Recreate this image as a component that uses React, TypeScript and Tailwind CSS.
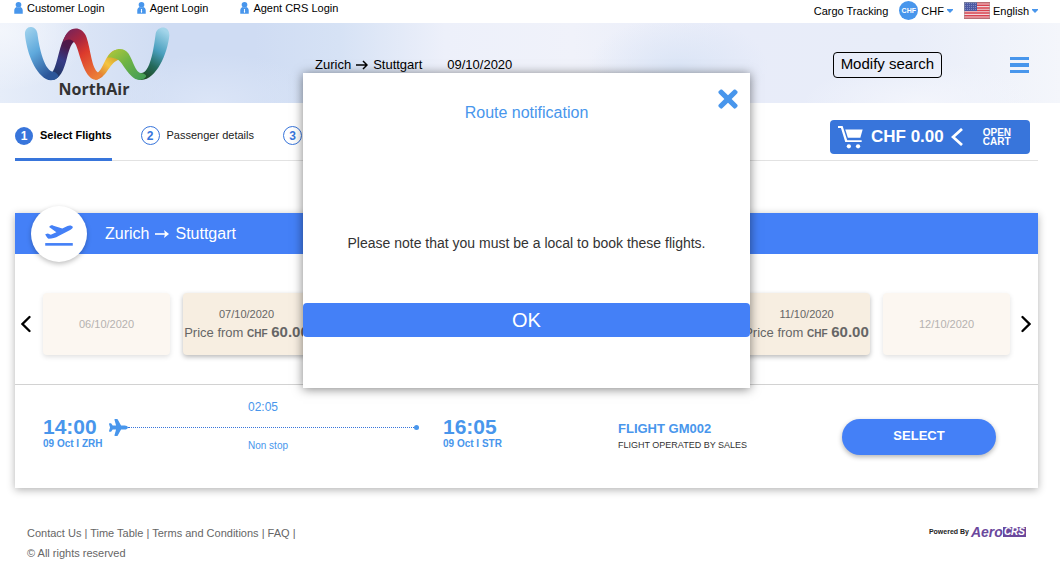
import React from 'react';
import { FaPlane, FaTimes } from 'react-icons/fa';

const LOGINS = [
  { label: 'Customer Login', badge: false },
  { label: 'Agent Login', badge: true },
  { label: 'Agent CRS Login', badge: true },
];

const STEPS = ['Select Flights', 'Passenger details', 'Extras', 'Payment'];

const DATES = [
  { id: 1, date: '06/10/2020', price: null },
  { id: 2, date: '07/10/2020', price: '60.00' },
  { id: 3, date: null, price: null },
  { id: 4, date: null, price: null },
  { id: 5, date: null, price: null },
  { id: 6, date: '11/10/2020', price: '60.00' },
  { id: 7, date: '12/10/2020', price: null },
];

const FOOTER_LINKS = ['Contact Us', 'Time Table', 'Terms and Conditions', 'FAQ'];

const PersonIcon: React.FC<{ badge: boolean }> = ({ badge }) => (
  <svg viewBox="0 0 24 34" className="h-3 w-[9px]" fill="#4896ec" aria-hidden="true">
    <circle cx="12" cy="8" r="8" />
    <path d="M0 33V24c0-6 3-8 7-10 3 2 7 2 10 0 4 2 7 4 7 10v9z" />
    {badge && <path d="M10 20h4l-1 3 1 5-2 3-2-3 1-5z" fill="#fff" />}
  </svg>
);

const Caret = () => (
  <svg viewBox="0 0 6 4" className="h-1 w-1.5" fill="#4896ec" aria-hidden="true">
    <path d="M0 0h6v1L3 4 0 1z" />
  </svg>
);

const Arrow: React.FC<{ className: string }> = ({ className }) => (
  <svg viewBox="0 0 12 10" className={className} fill="none" stroke="currentColor" strokeWidth="1.500" aria-hidden="true">
    <path d="M0 5h11M7 1l4 4-4 4" />
  </svg>
);

const SolidArrow: React.FC<{ className: string }> = ({ className }) => (
  <svg viewBox="0 0 14 10" className={className} aria-hidden="true">
    <path d="M0 5h11" stroke="currentColor" strokeWidth="1.600" />
    <path d="M9 1 14 5 9 9l1-4z" fill="currentColor" />
  </svg>
);

const Chevron: React.FC<{ d: string }> = ({ d }) => (
  <svg viewBox="0 0 10 18" className="h-[18px] w-2.5" fill="none" stroke="#000" strokeWidth="2.300" strokeLinecap="round" aria-hidden="true">
    <path d={d} />
  </svg>
);

const TakeoffIcon = () => (
  <svg viewBox="0 0 84 64" className="mt-1 h-[21px] w-7" fill="#4480f7" aria-hidden="true">
    <path d="M0 28l8-2 9 4 17-8L12 6C15 1 20 0 25 2l27 9 16-8c6-3 14-2 16 3 0 4-3 6-8 9L42 33c-12 7-20 9-32 9-4-3-8-9-10-14z" />
    <rect y="55" width="84" height="8" />
  </svg>
);

const CartIcon = () => (
  <svg viewBox="0 0 76 70" className="h-[23px] w-[25px]" fill="#fff" aria-hidden="true">
    <path d="M0 0h14l14 43h44v6H22L9 6H0z" />
    <path d="M22 11h53l-7 25H30z" />
    <circle cx="33" cy="62" r="6.500" />
    <circle cx="61" cy="62" r="6.500" />
  </svg>
);

const UsFlag = () => (
  <svg viewBox="0 0 26 17" className="h-[17px] w-[26px]" aria-hidden="true">
    <rect width="26" height="17" fill="#f0d8dc" />
    <path
      d="M0 .700h26M0 3.300h26M0 5.900h26M0 8.500h26M0 11.100h26M0 13.700h26M0 16.300h26"
      stroke="#d8434f"
      strokeWidth="1.500"
    />
    <rect width="13" height="9" fill="#4d5aa3" />
    <path d="M1 1.500h12M1 3.500h12M1 5.500h12M1 7.500h12" stroke="#8f97c8" strokeWidth=".8" strokeDasharray="1 1" />
    <rect x=".5" y=".5" width="25" height="16" fill="none" stroke="#999" strokeOpacity=".5" />
  </svg>
);

const Ribbon = () => (
  <svg viewBox="72 80 438 162" className="h-[54px] w-[146px]" aria-hidden="true">
    <defs>
      <linearGradient id="armLeft" x1="0" y1="0" x2=".5" y2="1">
        <stop offset="0" stopColor="#a6d6ef" />
        <stop offset=".5" stopColor="#5fa9dc" />
        <stop offset="1" stopColor="#2c5699" />
      </linearGradient>
      <linearGradient id="riseLeft" x1=".6" y1="0" x2=".3" y2="1">
        <stop offset="0" stopColor="#5b1240" />
        <stop offset=".3" stopColor="#4a1a4c" />
        <stop offset=".6" stopColor="#363b86" />
        <stop offset="1" stopColor="#1b365f" />
      </linearGradient>
      <linearGradient id="fallLeft" x1=".2" y1="0" x2=".8" y2="1">
        <stop offset="0" stopColor="#7c2457" />
        <stop offset=".25" stopColor="#a8263f" />
        <stop offset=".5" stopColor="#dc3a2c" />
        <stop offset="1" stopColor="#ec8038" />
      </linearGradient>
      <linearGradient id="riseRight" x1=".8" y1="0" x2=".1" y2="1">
        <stop offset="0" stopColor="#c59a26" />
        <stop offset=".45" stopColor="#f4c542" />
        <stop offset="1" stopColor="#d9622b" />
      </linearGradient>
      <linearGradient id="fallRight" x1="0" y1="0" x2="1" y2="1">
        <stop offset="0" stopColor="#b6c93a" />
        <stop offset=".45" stopColor="#6fb445" />
        <stop offset="1" stopColor="#3d9a58" />
      </linearGradient>
      <linearGradient id="armRight" x1=".7" y1="0" x2=".3" y2="1">
        <stop offset="0" stopColor="#a3d5ea" />
        <stop offset=".4" stopColor="#4a9fbe" />
        <stop offset=".7" stopColor="#246a5c" />
        <stop offset="1" stopColor="#1f4a22" />
      </linearGradient>
    </defs>
    <path d="M158 214C174 190 178 130 198 104c8-12 20-16 30-14l0 32c-14 3-20 25-27 50-9 37-22 68-49 67z" fill="url(#riseLeft)" />
    <path d="M75 104C72 74 107 72 112 98c6 48 22 118 50 116 7 2 12 8 14 15-10 12-27 13-38 7C100 213 80 150 75 104z" fill="url(#armLeft)" />
    <path d="M285 238c35-2 40-48 70-60l-3-30c-34 2-40 57-60 70z" fill="url(#riseRight)" />
    <path d="M190 124c8-46 52-52 67-19 14 32 16 92 35 110 5 5 9 6 14 5-4 18-18 22-30 15-26-16-36-71-48-101-8-17-23-22-38-10z" fill="url(#fallLeft)" />
    <path d="M424 239c46-3 78-79 84-133 2-32-36-32-41-6-6 48-17 117-43 118l-14 18z" fill="url(#armRight)" />
    <path d="M322 172c18-32 50-32 64-12 14 22 20 56 38 59 8 1 16 4 14 10-12 14-30 12-43-1-23-23-29-43-43-51-12-5-20-6-30-5z" fill="url(#fallRight)" />
  </svg>
);

const TopBar = () => (
  <div className="flex h-[23px] items-start justify-between pl-[14px] pr-[22px] text-[11px] leading-4 text-black">
    <nav className="flex gap-8">
      {LOGINS.map((login) => (
        <a key={login.label} href="#" className="flex items-center gap-1">
          <PersonIcon badge={login.badge} />
          {login.label}
        </a>
      ))}
    </nav>
    <div className="flex h-[21px] items-center gap-[11px]">
      <a href="#">Cargo Tracking</a>
      <button type="button" className="flex items-center gap-[3px]">
        <span className="flex size-[19px] items-center justify-center rounded-full bg-[#4896ec] text-[7px] font-bold text-white">
          CHF
        </span>
        CHF
        <Caret />
      </button>
      <button type="button" className="flex items-center gap-[3px]">
        <UsFlag />
        English
        <Caret />
      </button>
    </div>
  </div>
);

const Header = () => (
  <header className="flex h-20 bg-[radial-gradient(90px_60px_at_0%_10%,#f3f6fc_0%,transparent_100%),radial-gradient(110px_50px_at_20%_100%,#dbe5f7_0%,transparent_100%),radial-gradient(90px_50px_at_64%_55%,#dbe5f6_0%,transparent_100%),radial-gradient(120px_40px_at_87%_100%,#f3f5fc_0%,transparent_100%),linear-gradient(90deg,#e6edf9_0%,#cfdcf3_16%,#cfdcf3_24%,#d6e2f5_32%,#edf0fa_42%,#f0f2fa_54%,#e8ecf9_68%,#e8edf9_85%,#f4f6fb_100%)] pl-6 pr-[31px]">
    <a href="#" className="flex w-[291px] shrink-0 flex-col items-start pt-1">
      <Ribbon />
      <span className="w-[140px] text-center font-['Open_Sans',sans-serif] text-base leading-4 font-bold text-[#333]">
        NorthAir
      </span>
    </a>
    <p className="flex flex-1 items-center pt-1 text-[13px] text-black">
      Zurich
      <Arrow className="mx-[5px] h-2.5 w-3" />
      Stuttgart
      <span className="ml-[25px]">09/10/2020</span>
    </p>
    <div className="flex items-center gap-[68px] pt-1">
      <button type="button" className="h-[26px] rounded-[4px] border border-black px-[7px] pb-0.5 text-[15px] leading-4 text-black">
        Modify search
      </button>
      <button type="button" aria-label="Menu" className="flex w-[19px] flex-col gap-[3px]">
        <span className="h-[3px] bg-[#4896ec]" />
        <span className="h-1 bg-[#4896ec]" />
        <span className="h-[3px] bg-[#4896ec]" />
      </button>
    </div>
  </header>
);

const Steps = () => (
  <div className="flex h-[58px] justify-between border-b border-[#e2e2e2]">
    <ol className="flex gap-[29px] pt-2.5 text-[11px] whitespace-nowrap text-[#222]">
      {STEPS.map((step, index) => (
        <li
          key={step}
          className={
            index === 0
              ? '-mb-px flex items-center gap-[7px] border-b-3 border-[#3875db] font-bold text-black'
              : '-mb-px flex items-center gap-[7px] border-b-3 border-transparent'
          }
        >
          <span
            className={
              index === 0
                ? 'flex size-[18px] items-center justify-center rounded-full bg-[#3875db] text-xs text-white'
                : 'flex size-[19px] items-center justify-center rounded-full border border-[#3875db] text-xs font-bold text-[#3875db]'
            }
          >
            {index + 1}
          </span>
          {step}
        </li>
      ))}
    </ol>
    <button type="button" className="mt-[17px] mr-2 flex h-[34px] w-[200px] items-center rounded-[4px] bg-[#3875db] pl-2 font-bold text-white">
      <CartIcon />
      <span className="ml-2 text-[17px]">CHF 0.00</span>
      <svg viewBox="0 0 12 18" className="ml-[7px] h-[18px] w-3" fill="none" stroke="#fff" strokeWidth="2.800" aria-hidden="true">
        <path d="M11 1 2 9l9 8" />
      </svg>
      <span className="ml-5 text-left text-[10px] leading-[9px]">
        OPEN
        <br />
        CART
      </span>
    </button>
  </div>
);

const DateStrip = () => (
  <div className="flex items-center border-b border-[#d2d2d2] pt-[39px] pb-[29px]">
    <button type="button" aria-label="Earlier dates" className="flex w-7 justify-center pr-1.5">
      <Chevron d="M8.500 2 1.500 9l7 7" />
    </button>
    <div className="grid flex-1 grid-cols-7 gap-[13px]">
      {DATES.map(({ id, date, price }) => (
        <button
          type="button"
          key={id}
          className={
            price
              ? 'flex h-[62px] min-w-0 flex-col items-center justify-center rounded-[4px] bg-[#f7eee1] pt-0.5 text-[11px] whitespace-nowrap text-[#666] shadow-[0_2px_5px_rgba(0,0,0,0.28)]'
              : 'flex h-[62px] min-w-0 flex-col items-center justify-center rounded-[4px] bg-[#fcf7f1] text-[11px] text-[#b5b2b0] shadow-[0_2px_5px_rgba(0,0,0,0.12)]'
          }
        >
          {date && <span className="leading-4">{date}</span>}
          {price && (
            <span className="text-[13px] leading-5">
              Price from <b className="text-[10px]">CHF</b> <b className="text-[15px]">{price}</b>
            </span>
          )}
        </button>
      ))}
    </div>
    <button type="button" aria-label="Later dates" className="flex w-7 justify-center pl-1">
      <Chevron d="M1.500 2l7 7-7 7" />
    </button>
  </div>
);

const FlightRow = () => (
  <div className="grid h-[103px] grid-cols-[66px_1fr_175px_224px_154px] items-start pr-[42px] pl-7 text-[#4896ec]">
    <div className="pt-[34px] font-bold whitespace-nowrap">
      <p className="text-[21px] leading-4">14:00</p>
      <p className="mt-1 text-[10px] leading-[10px]">09 Oct I ZRH</p>
    </div>
    <div className="pt-[14px] pr-6">
      <p className="mx-auto w-8 text-xs leading-4">02:05</p>
      <div className="my-[3px] flex items-center">
        <FaPlane size={19} />
        <span className="flex-1 border-t border-dotted border-[#3875db]" />
        <span className="size-[5px] rounded-full bg-[#4896ec]" />
      </div>
      <p className="mx-auto w-8 text-[10px] leading-3 whitespace-nowrap">Non stop</p>
    </div>
    <div className="pt-[34px] font-bold">
      <p className="text-[21px] leading-4">16:05</p>
      <p className="mt-1 text-[10px] leading-[10px]">09 Oct I STR</p>
    </div>
    <div className="pt-9">
      <p className="text-[13px] leading-4 font-bold">FLIGHT GM002</p>
      <p className="text-[9px] leading-4 text-[#333]">FLIGHT OPERATED BY SALES</p>
    </div>
    <button
      type="button"
      className="mt-[34px] h-9 rounded-full bg-[#4480f7] pb-0.5 text-[13px] font-bold text-white shadow-[0_2px_5px_rgba(0,0,0,0.3)]"
    >
      SELECT
    </button>
  </div>
);

const Footer = () => (
  <footer className="mt-[35px] flex justify-between px-3 text-[11px] leading-5 text-[#666]">
    <div>
      <p>
        {FOOTER_LINKS.map((link) => (
          <React.Fragment key={link}>
            <a href="#">{link}</a> |{' '}
          </React.Fragment>
        ))}
      </p>
      <p>© All rights reserved</p>
    </div>
    <p className="flex h-[18px] items-center font-bold">
      <span className="mr-0.5 text-[7px] text-[#222]">Powered By</span>
      <span className="text-sm text-[#6b489d] italic">Aero</span>
      <span className="bg-[#6b489d] px-px text-[10px] leading-[10px] text-white italic">CRS</span>
    </p>
  </footer>
);

const RouteNotification = () => (
  <div className="absolute inset-x-0 top-[73px] z-10 flex justify-center pr-[22px] pl-[15px]">
    <div
      role="dialog"
      aria-labelledby="route-title"
      className="flex w-[447px] flex-col bg-white pb-[51px] text-center shadow-[0_1px_10px_rgba(0,0,0,0.5)]"
    >
      <button type="button" aria-label="Close" className="mt-3 mr-2 self-end text-[#4896ec]">
        <FaTimes size={28} />
      </button>
      <h2 id="route-title" className="-mt-3 text-base leading-6 text-[#4896ec]">
        Route notification
      </h2>
      <p className="mt-[108px] text-sm leading-5 text-[#333]">
        Please note that you must be a local to book these flights.
      </p>
      <button type="button" className="mt-[50px] h-[34px] rounded-[4px] bg-[#4480f7] text-xl text-white">
        OK
      </button>
    </div>
  </div>
);

const App: React.FC = () => {
  return (
    <div className="relative bg-white font-['Liberation_Sans',Arial,sans-serif]">
      <TopBar />
      <Header />
      <main className="pr-[22px] pl-[15px]">
        <Steps />
        <section className="mt-[52px] bg-white shadow-[0_2px_8px_rgba(0,0,0,0.3)]">
          <div className="flex h-[41px] items-center bg-[#4480f7] pl-4 text-base text-white">
            <span className="-my-2 flex size-14 items-center justify-center rounded-full bg-white shadow-[0_2px_5px_rgba(0,0,0,0.25)]">
              <TakeoffIcon />
            </span>
            <h1 className="ml-[18px] flex items-center">
              Zurich
              <SolidArrow className="mx-1.5 h-2.5 w-[14px]" />
              Stuttgart
            </h1>
          </div>
          <DateStrip />
          <FlightRow />
        </section>
        <Footer />
      </main>
      <RouteNotification />
    </div>
  );
};

export default App;
